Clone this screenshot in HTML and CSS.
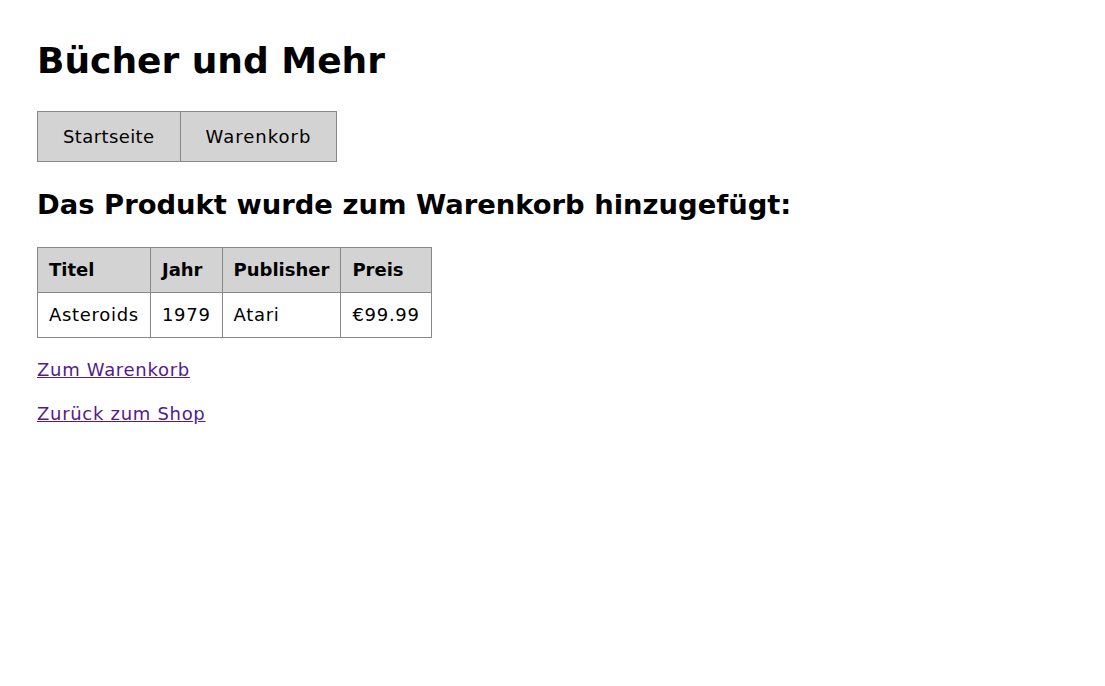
FILE: index.html
```html
<!DOCTYPE html>
<html lang="de">
<head>
<meta charset="utf-8">
<title>Bücher und Mehr</title>
<link rel="stylesheet" href="styles.css">
</head>
<body>
<h1 class="title">Bücher und Mehr</h1>
<nav class="nav">
  <a class="nav-btn" href="#">Startseite</a>
  <a class="nav-btn" href="#">Warenkorb</a>
</nav>
<h2 class="subtitle">Das Produkt wurde zum Warenkorb hinzugefügt:</h2>
<table class="product">
  <thead>
    <tr><th>Titel</th><th>Jahr</th><th>Publisher</th><th>Preis</th></tr>
  </thead>
  <tbody>
    <tr><td>Asteroids</td><td>1979</td><td>Atari</td><td>€99.99</td></tr>
  </tbody>
</table>
<p class="link-line"><a class="link" href="#">Zum Warenkorb</a></p>
<p class="link-line"><a class="link" href="#">Zurück zum Shop</a></p>
</body>
</html>
```
FILE: styles.css
```css
html, body { margin: 0; padding: 0; background: #fff; }
body {
  font-family: "DejaVu Sans", sans-serif;
  font-size: 18px;
  letter-spacing: 0.7px;
  color: #000;
  padding: 32px 37px;
}
.title {
  font-size: 36px;
  font-weight: bold;
  letter-spacing: 0;
  margin: 8px 0 30px;
}
.nav { display: flex; margin-bottom: 27px; }
.nav-btn {
  display: block;
  background: #d3d3d3;
  border: 1px solid #888;
  padding: 12px 25px;
  color: #000;
  text-decoration: none;
  line-height: 25px;
}
.nav-btn:first-child { letter-spacing: 0.4px; }
.nav-btn + .nav-btn { border-left: none; letter-spacing: 1px; padding: 12px 25px; }
.subtitle { font-size: 27.4px; font-weight: bold; letter-spacing: 0; margin: 0 0 27px; }
.product { border-collapse: collapse; margin-bottom: 19px; }
.product th, .product td {
  border: 1px solid #888;
  padding: 10px 11px;
  text-align: left;
  line-height: 24px;
}
.product th { background: #d3d3d3; letter-spacing: 0; }
.link-line { margin: 0 0 18px; line-height: 26px; }
.link { color: #551a8b; }
```
